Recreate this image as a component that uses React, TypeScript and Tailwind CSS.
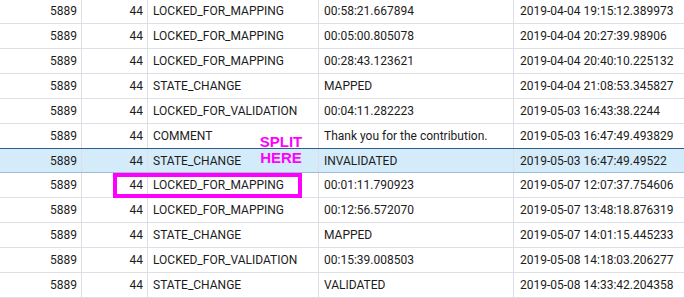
const rows: [string, string, string][] = [
  ['LOCKED_FOR_MAPPING', '00:58:21.667894', '2019-04-04 19:15:12.389973'],
  ['LOCKED_FOR_MAPPING', '00:05:00.805078', '2019-04-04 20:27:39.98906'],
  ['LOCKED_FOR_MAPPING', '00:28:43.123621', '2019-04-04 20:40:10.225132'],
  ['STATE_CHANGE', 'MAPPED', '2019-04-04 21:08:53.345827'],
  ['LOCKED_FOR_VALIDATION', '00:04:11.282223', '2019-05-03 16:43:38.2244'],
  ['COMMENT', 'Thank you for the contribution.', '2019-05-03 16:47:49.493829'],
  ['STATE_CHANGE', 'INVALIDATED', '2019-05-03 16:47:49.49522'],
  ['LOCKED_FOR_MAPPING', '00:01:11.790923', '2019-05-07 12:07:37.754606'],
  ['LOCKED_FOR_MAPPING', '00:12:56.572070', '2019-05-07 13:48:18.876319'],
  ['STATE_CHANGE', 'MAPPED', '2019-05-07 14:01:15.445233'],
  ['LOCKED_FOR_VALIDATION', '00:15:39.008503', '2019-05-08 14:18:03.206277'],
  ['STATE_CHANGE', 'VALIDATED', '2019-05-08 14:33:42.204358'],
]

export default function App() {
  return (
    <div className="relative w-[684px] h-[298px] overflow-hidden bg-white text-[12px] text-[#1c1c1c]" style={{ fontFamily: 'Roboto, "Liberation Sans", sans-serif' }}>
      <div className="-mt-[1px]">
        {rows.map((r, i) => {
          const selected = i === 6
          return (
            <div
              key={i}
              className={
                selected
                  ? 'grid grid-cols-[82px_66px_171px_195px_1fr] h-[25px] bg-[#d4ebfa] border-t border-t-[#2e5f8c] border-b border-b-[#9fbdd6] -mt-px'
                  : 'grid grid-cols-[82px_66px_171px_195px_1fr] h-[25px] border-b border-[#dcdfe6]'
              }
            >
              <div className="flex items-center justify-end pr-[4px] border-r border-[#dcdfe6]">5889</div>
              <div className="flex items-center justify-end pr-[4px] border-r border-[#dcdfe6]">44</div>
              <div className="flex items-center pl-[5px] border-r border-[#dcdfe6]">{r[0]}</div>
              <div className="flex items-center pl-[5px] border-r border-[#dcdfe6]">{r[1]}</div>
              <div className="flex items-center pl-[6px]">{r[2]}</div>
            </div>
          )
        })}
      </div>

      {/* annotation */}
      <div
        className="absolute left-[255px] top-[134px] w-[52px] text-center text-[15px] leading-[16px] font-bold text-[#ff00ff]"
        style={{ fontFamily: '"Liberation Sans", Arial, sans-serif' }}
      >
        SPLIT
        <br />
        HERE
      </div>
      <div className="absolute left-[113px] top-[173px] w-[189px] h-[25px] border-[4px] border-[#ff00ff]" />
    </div>
  )
}
